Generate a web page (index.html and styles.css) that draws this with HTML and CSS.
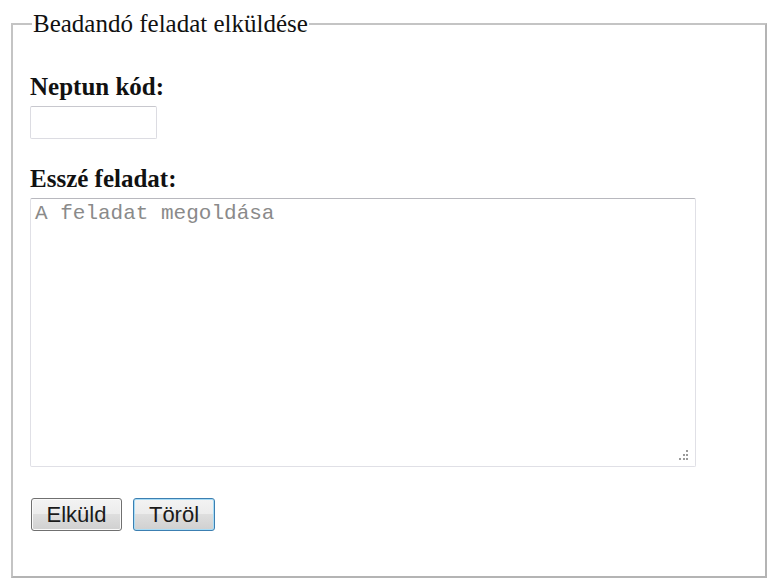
FILE: index.html
```html
<!DOCTYPE html>
<html>
<head>
<meta charset="utf-8">
<link rel="stylesheet" href="styles.css">
</head>
<body>
<form class="form">
  <fieldset class="box">
    <legend class="legend">Beadandó feladat elküldése</legend>
    <div class="field field-first">
      <label class="label" for="neptun">Neptun kód:</label>
      <input class="input" id="neptun" type="text">
    </div>
    <div class="field">
      <label class="label" for="essze">Esszé feladat:</label>
      <div class="area-wrap">
        <textarea class="area" id="essze" placeholder="A feladat megoldása"></textarea>
        <svg class="grip" width="12" height="12" viewBox="0 0 12 12" aria-hidden="true">
          <rect x="9" y="1" width="2" height="2" fill="#9a9a9a"/>
          <rect x="6" y="5" width="2" height="2" fill="#9a9a9a"/>
          <rect x="9" y="5" width="2" height="2" fill="#9a9a9a"/>
          <rect x="2" y="9" width="2" height="2" fill="#9a9a9a"/>
          <rect x="6" y="9" width="2" height="2" fill="#9a9a9a"/>
          <rect x="9" y="9" width="2" height="2" fill="#9a9a9a"/>
        </svg>
      </div>
    </div>
    <div class="buttons">
      <button class="btn" type="submit">Elküld</button>
      <button class="btn btn-focus" type="reset">Töröl</button>
    </div>
  </fieldset>
</form>
</body>
</html>
```
FILE: styles.css
```css
html, body {
  margin: 0;
  padding: 0;
  background: #fff;
}
body {
  padding: 10px 10px 0 11px;
  font-family: "Liberation Serif", "Times New Roman", serif;
  color: #000;
}
.form {
  margin: 0;
}
.box {
  margin: 0;
  width: 756px;
  box-sizing: border-box;
  border: 2px solid #b4b4b4;
  border-left-color: #c4c4c4;
  border-top-color: #c4c4c4;
  padding: 0 0 45px 17px;
}
.legend {
  font-size: 25px;
  padding: 0 1px;
  margin-left: 2px;
  line-height: 28px;
  color: #111;
}
.field {
  display: flex;
  flex-direction: column;
  align-items: flex-start;
}
.field-first {
  margin-top: 35px;
}
.label {
  font-weight: bold;
  font-size: 25px;
  line-height: 28px;
  margin-bottom: 5px;
  color: #111;
}
.input {
  width: 127px;
  height: 33px;
  box-sizing: border-box;
  border: 1px solid #dcdce2;
  border-top-color: #c8c8ce;
  border-radius: 2px;
  margin: 0 0 26px 0;
  padding: 2px 4px;
}
.area-wrap {
  position: relative;
  display: flex;
}
.area {
  width: 666px;
  height: 269px;
  box-sizing: border-box;
  border: 1px solid #e0e0e6;
  border-top-color: #b8b8be;
  border-radius: 2px;
  margin: 0;
  padding: 3px 4px;
  font-family: "Liberation Mono", "Courier New", monospace;
  font-size: 21px;
  line-height: 24px;
  resize: none;
}
.area::placeholder {
  color: #8a8a8a;
}
.grip {
  position: absolute;
  right: 7px;
  bottom: 6px;
}
.buttons {
  display: flex;
  gap: 11px;
  margin-top: 31px;
  padding-left: 1px;
}
.btn {
  height: 33px;
  box-sizing: border-box;
  font-family: "Liberation Sans", Arial, sans-serif;
  font-size: 22px;
  line-height: 1;
  color: #1a1a1a;
  border: 1px solid #707070;
  border-radius: 3px;
  background: linear-gradient(#f3f3f3 0%, #ececec 50%, #dedede 50%, #d0d0d0 100%);
  box-shadow: inset 0 0 0 1px #fafafa;
  padding: 0;
  width: 91px;
}
.btn-focus {
  width: 82px;
  border-color: #3c7fb1;
  box-shadow: inset 0 0 0 1px #a8dcf6;
}
```
